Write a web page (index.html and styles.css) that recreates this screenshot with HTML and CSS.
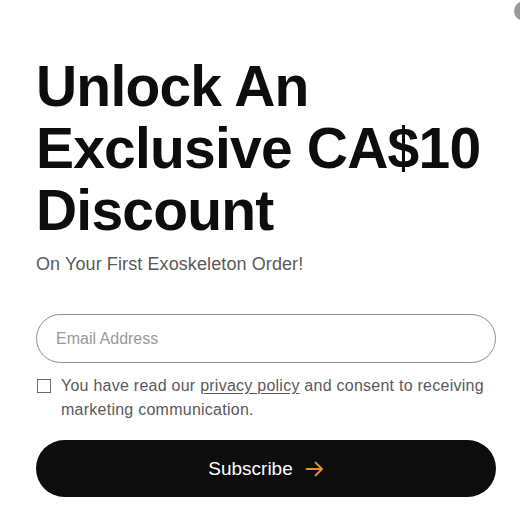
FILE: index.html
```html
<!DOCTYPE html>
<html lang="en">
<head>
<meta charset="utf-8">
<title>Subscribe</title>
<link rel="stylesheet" href="styles.css">
</head>
<body>
<div class="close-dot"></div>
<main class="popup">
  <h1 class="title">Unlock An Exclusive CA$10 Discount</h1>
  <p class="subtitle">On Your First Exoskeleton Order!</p>
  <form class="form">
    <input class="email" type="email" placeholder="Email Address">
    <label class="consent">
      <span class="box"></span>
      <span class="consent-text">You have read our <a href="#" class="link">privacy policy</a> and consent to receiving marketing communication.</span>
    </label>
    <button type="button" class="submit">
      <span>Subscribe</span>
      <svg class="arrow" width="19" height="16" viewBox="0 0 19 16" fill="none" stroke="#e8912a" stroke-width="1.8" stroke-linecap="round" stroke-linejoin="round"><path d="M1.5 8H17M10.5 1.5L17 8l-6.5 6.5"/></svg>
    </button>
  </form>
</main>
</body>
</html>
```
FILE: styles.css
```css
* { box-sizing: border-box; }
html, body { margin: 0; padding: 0; background: #fff; }
body { font-family: "Liberation Sans", Arial, sans-serif; color: #0d0d0d; overflow: hidden; }
.close-dot {
  position: absolute; top: 1px; right: -14px;
  width: 20px; height: 20px; border-radius: 50%;
  background: #9a9a9a;
}
.popup { padding: 55px 24px 0 36px; }
.title {
  margin: 0;
  font-size: 57px; line-height: 62px; font-weight: 700;
  letter-spacing: -0.8px; color: #0d0d0d;
}
.subtitle { margin: 12px 0 0; font-size: 18px; line-height: 22px; color: #5a5a5a; letter-spacing: 0.1px; }
.form { margin-top: 39px; display: flex; flex-direction: column; }
.email {
  height: 49px; width: 100%;
  border: 1.5px solid #8e8e8e; border-radius: 25px;
  padding: 0 19px; font: inherit; font-size: 16px; color: #333; outline: none;
}
.email::placeholder { color: #9a9a9a; }
.consent { display: flex; gap: 10px; margin-top: 14px; align-items: flex-start; }
.box { flex: none; width: 14px; height: 14px; border: 1.5px solid #6b6b6b; margin-top: 2px; margin-left: 1px; }
.consent-text { font-size: 16px; line-height: 24px; color: #5a5a5a; margin-top: -3px; letter-spacing: 0.25px; }
.link { color: #5a5a5a; text-decoration: underline; text-underline-offset: 2px; }
.submit {
  margin-top: 18px; height: 57px; width: 100%;
  border: none; border-radius: 29px; background: #0d0d0d; color: #fff;
  font: inherit; font-size: 19px;
  display: flex; align-items: center; justify-content: center; gap: 12px;
}
.arrow { display: block; }
```
